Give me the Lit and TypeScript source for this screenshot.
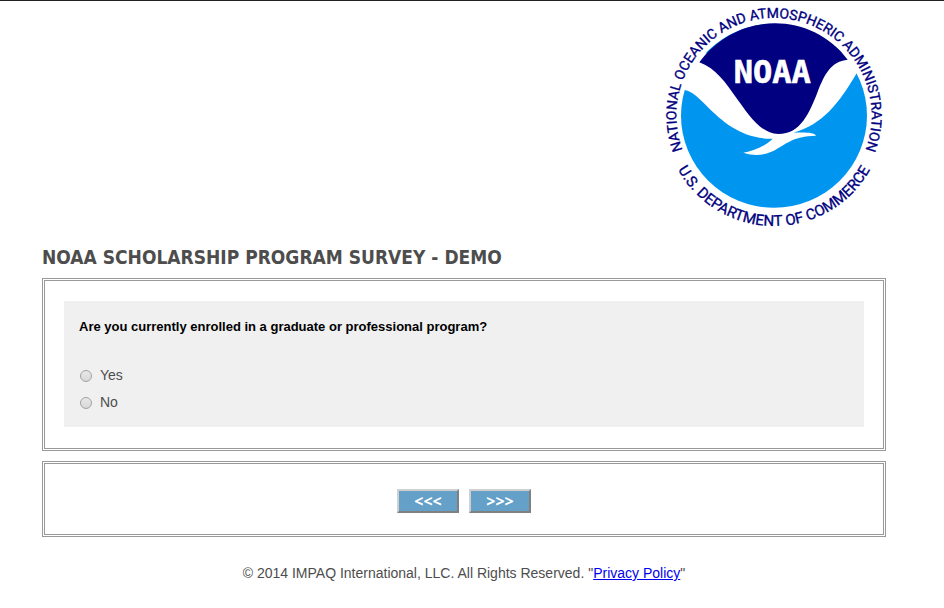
import { LitElement, html, css, svg } from "lit";
import { customElement, state } from "lit/decorators.js";

@customElement("noaa-logo")
class NoaaLogo extends LitElement {
  static styles = css`
    :host { display: block; }
    svg { display: block; width: 222px; height: 235px; }
    .ring { font-family: Roboto, "Liberation Sans", sans-serif; font-size: 42px; fill: #000080; stroke: #000080; stroke-width: 1px; }
    .lower { font-size: 45px; }
    .name { font: bold 96px "DejaVu Sans Mono", monospace; fill: #fff; stroke: #fff; stroke-width: 2px; }
  `;
  render() {
    return html`<svg viewBox="24 0 666 705" role="img" aria-label="NOAA logo">
      ${svg`
      <defs>
        <path id="upper" d="M94 482A293 293 0 1 1 614 482" />
        <path id="lower" d="M44 463A331 331 0 0 0 664 463" />
      </defs>
      <ellipse cx="354" cy="347" rx="279" ry="276" fill="#0096f0" />
      <path fill="#fff" d="M60 272L84 270C108 272 128 294 150 316C203 370 262 418 350 416C328 438 296 452 262 458C292 468 323 467 350 454C388 434 410 408 480 407C474 395 438 397 412 398C500 374 549 310 602 220L650 190L575 160L130 160L60 200Z" />
      <path fill="#000080" d="M130 187C243 33 464 32 575 179C525 184 506 222 485 275C461 337 434 402 367 402C310 400 274 338 244 298C207 246 181 206 130 187Z" />
      <text class="name" x="233" y="250">NOAA</text>
      <text class="ring"><textPath href="#upper" startOffset="50%" text-anchor="middle">NATIONAL OCEANIC AND ATMOSPHERIC ADMINISTRATION</textPath></text>
      <text class="ring lower"><textPath href="#lower" startOffset="50%" text-anchor="middle">U.S. DEPARTMENT OF COMMERCE</textPath></text>`}
    </svg>`;
  }
}

@customElement("app-root")
class AppRoot extends LitElement {
  static styles = css`
    :host {
      display: block;
      border-top: 1px solid #222;
      font: 14px/20px "Liberation Sans", Arial, sans-serif;
      color: #4d4d4d;
      background: #fff;
    }
    .page { padding: 0 58px 0 42px; }
    .masthead { display: flex; justify-content: flex-end; margin-top: -1px; }
    h1 { margin: 8px 0 7px; font: bold 19px/28px "DejaVu Sans Condensed", Tahoma, sans-serif; }
    .box { border: 3px double #999; margin-bottom: 10px; }
    .question { padding: 20px 19px 21px; }
    fieldset { margin: 0; border: 0; min-width: 0; padding: 16px 15px 15px; background: #f0f0f0; }
    legend { float: left; width: 100%; padding: 0; margin-bottom: 28px; font-weight: bold; font-size: 13px; color: #000; }
    .choice { display: flex; align-items: center; gap: 8px; clear: both; }
    .choice + .choice { margin-top: 7px; }
    .choice input {
      appearance: none;
      width: 12px;
      height: 12px;
      margin: 2px 0 0 1px;
      border: 1px solid #a2a2a2;
      border-radius: 50%;
      background: linear-gradient(#e8e8e8, #d8d8d8);
    }
    .choice input:checked { background: radial-gradient(#444 35%, #e0e0e0 40%); }
    .nav { display: flex; justify-content: center; gap: 10px; padding: 25px 0 21px; }
    button {
      width: 62px;
      height: 24px;
      padding: 0;
      border: 2px solid;
      border-color: #d0d0d0 #808080 #808080 #d0d0d0;
      background: #64a0c8;
      color: #fff;
      font: bold 16px/20px "Noto Sans", Tahoma, sans-serif;
    }
    footer { padding: 16px 0; text-align: center; }
    a { color: #00e; }
  `;

  @state() answer = "";

  choice(label: string) {
    return html`<label class="choice">
      <input type="radio" name="enrolled" .checked=${this.answer === label} @change=${() => (this.answer = label)} />
      <span>${label}</span>
    </label>`;
  }

  render() {
    return html`<div class="page">
      <header class="masthead"><noaa-logo></noaa-logo></header>
      <main>
        <h1>NOAA SCHOLARSHIP PROGRAM SURVEY - DEMO</h1>
        <section class="box question">
          <fieldset>
            <legend>Are you currently enrolled in a graduate or professional program?</legend>
            ${["Yes", "No"].map((c) => this.choice(c))}
          </fieldset>
        </section>
        <nav class="box nav">
          <button type="button" aria-label="Previous">&lt;&lt;&lt;</button>
          <button type="button" aria-label="Next">&gt;&gt;&gt;</button>
        </nav>
      </main>
      <footer>© 2014 IMPAQ International, LLC. All Rights Reserved. "<a href="#privacy">Privacy Policy</a>"</footer>
    </div>`;
  }
}
